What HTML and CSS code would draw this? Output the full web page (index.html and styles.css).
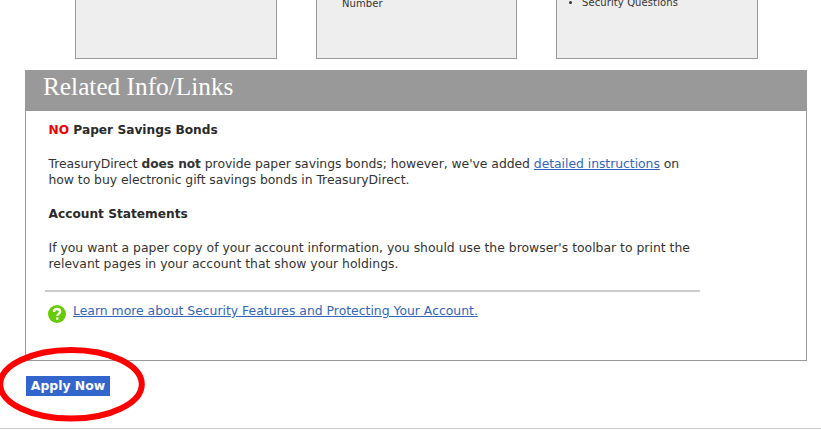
FILE: index.html
```html
<!DOCTYPE html>
<html lang="en">
<head>
    <meta charset="UTF-8">
    <meta name="viewport" content="width=device-width, initial-scale=1.0">
    <title>TreasuryDirect</title>
    <link rel="stylesheet" href="styles.css">
</head>
<body>

    <div class="cards">
        <div class="card"></div>
        <div class="card card-middle">
            <p class="card-text">Number</p>
        </div>
        <div class="card">
            <ul class="card-list">
                <li>Security Questions</li>
            </ul>
        </div>
    </div>

    <div class="related">
        <h2>Related Info/Links</h2>
        <div class="related-content">
            <p class="title"><span class="red">NO</span> Paper Savings Bonds</p>
            <p class="bonds">TreasuryDirect <b>does not</b> provide paper savings bonds; however, we've added <a href="#">detailed instructions</a> on<br>
            how to buy electronic gift savings bonds in TreasuryDirect.</p>
            <p class="title">Account Statements</p>
            <p>If you want a paper copy of your account information, you should use the browser's toolbar to print the<br>
            relevant pages in your account that show your holdings.</p>
            <hr>
            <div class="learn-more">
                <svg class="help-icon" width="18" height="18" viewBox="0 0 18 18">
                    <circle cx="9" cy="9" r="9" fill="#66cc00"/>
                    <path d="M5.9 6.9C5.9 4.9 7.2 4 9 4s3.1 1 3.1 2.7c0 2.2-2.7 2.2-2.7 4.2" fill="none" stroke="#fff" stroke-width="2.3"/>
                    <circle cx="9.3" cy="13.6" r="1.3" fill="#fff"/>
                </svg>
                <a href="#">Learn more about Security Features and Protecting Your Account.</a>
            </div>
        </div>
    </div>

    <div class="apply">
        <a href="#" class="apply-button">Apply Now</a>
        <svg class="highlight" width="150" height="80" viewBox="0 0 150 80">
            <ellipse cx="76" cy="40.3" rx="70.8" ry="34.3" fill="none" stroke="#ff0000" stroke-width="6"/>
        </svg>
    </div>

</body>
</html>
```

FILE: styles.css
```css
body {
    font-family: Verdana, "DejaVu Sans", sans-serif;
    font-size: 12.4px;
    line-height: 16px;
    color: #333;
    background-color: #fff;
    margin: 0;
    overflow: hidden;
}

p {
    margin: 0 0 18px;
}

a {
    color: #3366bb;
}

b {
    font-size: 12.2px;
    line-height: 1;
}

.cards {
    display: flex;
    gap: 39px;
    padding-left: 75px;
    height: 59px;
}

.card {
    width: 202px;
    box-sizing: border-box;
    background-color: #eee;
    border: 1px solid #999;
    border-top: none;
    font-size: 10px;
    line-height: 12px;
}

.card-middle {
    width: 201px;
}

.card-text {
    margin: -2px 0 0 25px;
    letter-spacing: 0.1px;
}

.card-list {
    margin: -3px 0 0;
    padding-left: 25px;
    letter-spacing: 0.1px;
}

.related {
    width: 782px;
    height: 291px;
    box-sizing: border-box;
    margin: 11px 0 0 25px;
    border: 1px solid #999;
}

.related h2 {
    height: 40px;
    margin: 0;
    padding-left: 17px;
    background-color: #999;
    color: #fff;
    font-family: "Liberation Serif", "Times New Roman", serif;
    font-size: 25.3px;
    font-weight: normal;
    line-height: 30px;
}

.related-content {
    padding: 11px 22px 0 22.5px;
}

.bonds {
    letter-spacing: -0.04px;
}

.title {
    font-size: 12.2px;
    font-weight: bold;
    color: #2a2a2a;
}

.red {
    color: #ee0000;
}

hr {
    width: 655px;
    height: 2px;
    margin: 0 0 0 -3.5px;
    border: none;
    background-color: #ccc;
}

.learn-more {
    display: flex;
    gap: 7px;
    margin-top: 11px;
}

.help-icon {
    margin: 2px 0 0 -0.5px;
}

.apply {
    position: relative;
    display: flex;
    height: 68px;
    padding: 15px 0 0 26px;
    box-sizing: border-box;
    border-bottom: 1px solid #ccc;
}

.apply-button {
    width: 84px;
    height: 20px;
    background-color: #3366cc;
    color: #fff;
    font-weight: bold;
    line-height: 20px;
    text-align: center;
    text-decoration: none;
}

/* red ring drawn over the apply button */
.highlight {
    position: absolute;
    left: -5px;
    top: -17px;
}
```
